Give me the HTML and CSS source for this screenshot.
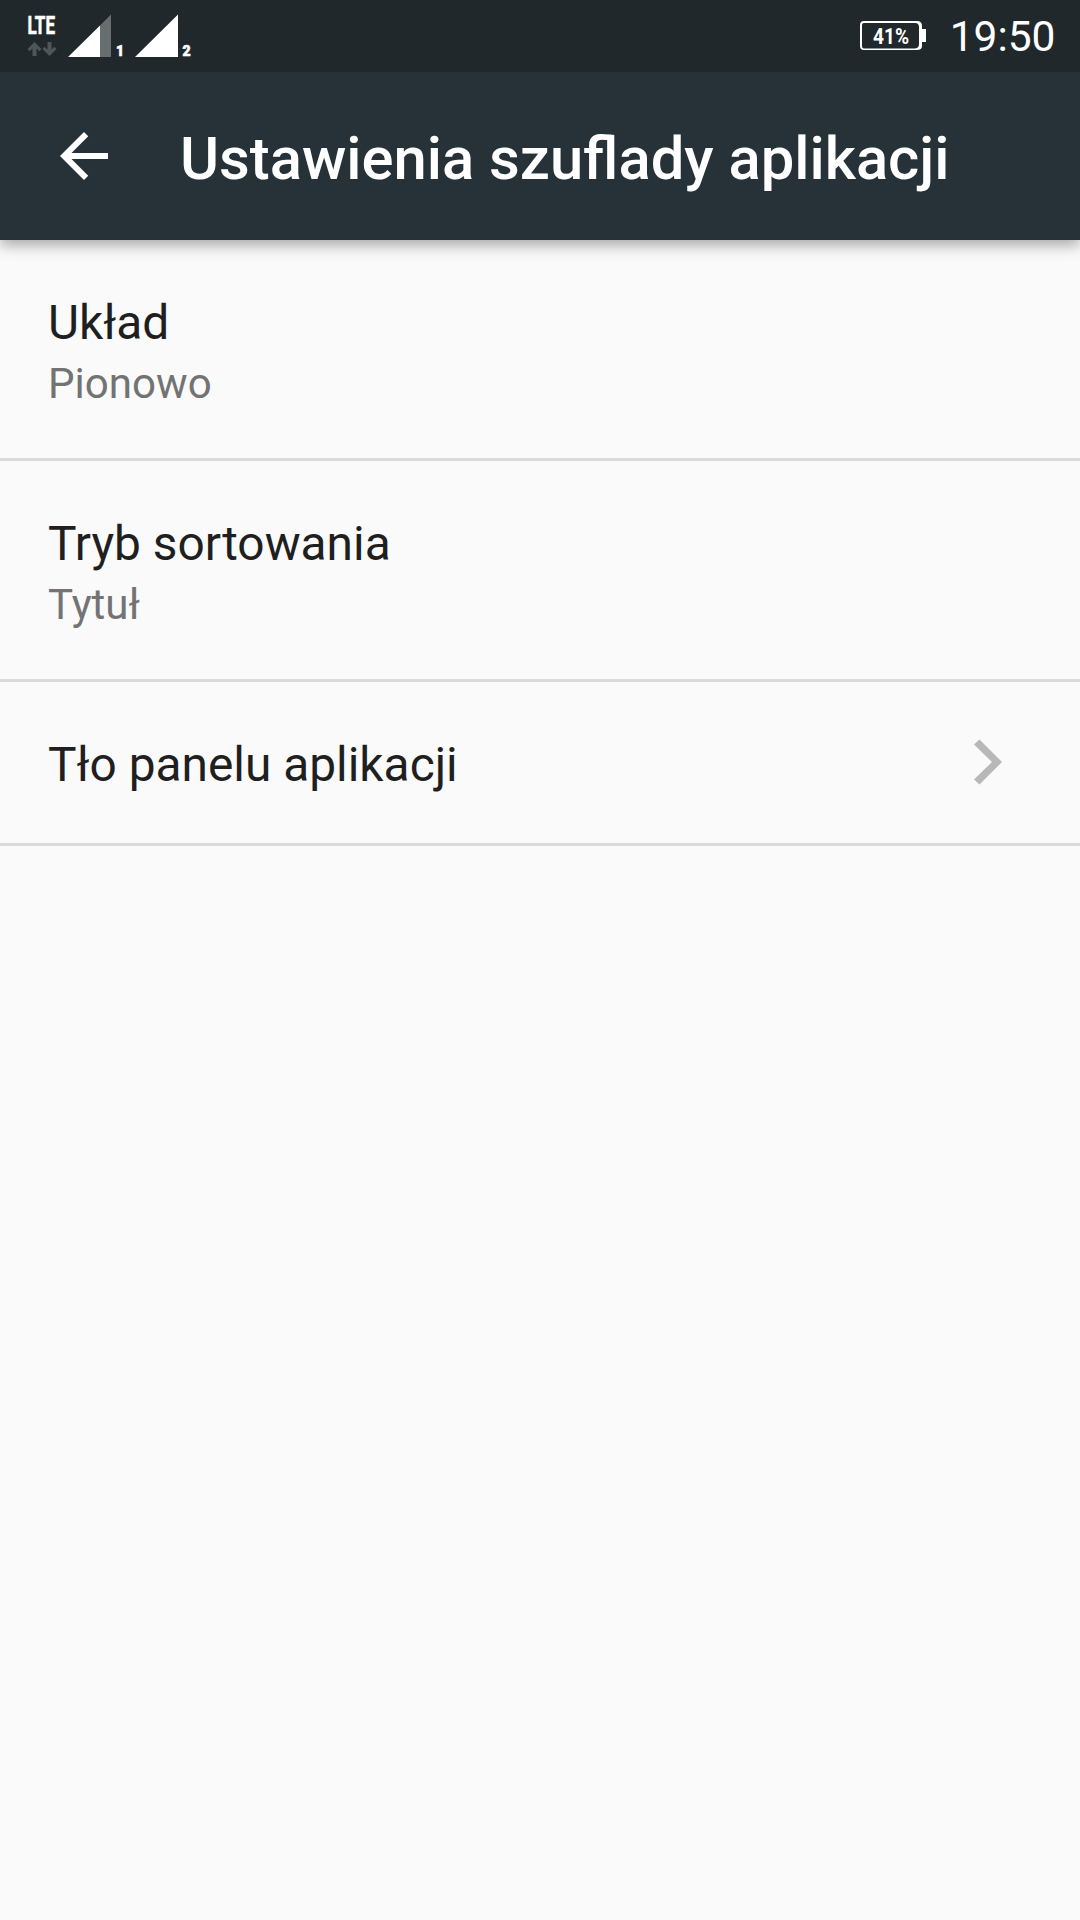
FILE: index.html
```html
<!DOCTYPE html>
<html lang="pl">
<head>
<meta charset="utf-8">
<title>Ustawienia szuflady aplikacji</title>
<link rel="stylesheet" href="styles.css">
</head>
<body>
<div class="status-bar">
  <svg class="signals" width="200" height="72" viewBox="0 0 200 72">
    <text class="network" x="27.500" y="33.500" textLength="27.500" lengthAdjust="spacingAndGlyphs">LTE</text>
    <path class="data-arrows" d="M34.500 42l7 7-2.200 2.200-2.800-2.600V56h-4v-7.400l-2.800 2.600-2.200-2.200zM49.500 56l-7-7 2.200-2.200 2.800 2.600V42h4v7.400l2.800-2.600 2.200 2.200z"/>
    <path class="signal-empty" d="M100 25.500 111 14.500V57H100z"/>
    <path class="signal-full" d="M68 57 100 25.500V57zM135 57 178 14.500V57z"/>
    <text class="sim" x="116" y="56">1</text>
    <text class="sim" x="182.500" y="56">2</text>
  </svg>
  <div class="status-right">
    <svg class="battery" width="66" height="30" viewBox="0 0 66 30">
      <path class="battery-case" fill-rule="evenodd" d="M4 0H57Q62 0 62 5V8H66V21H62V25Q62 29 57 29H4Q0 29 0 25V4Q0 0 4 0zM4 2Q2 2 2 4V25Q2 27.500 4 27.500H55Q59 27 59 23V6Q59 2 55 2z"/>
      <text class="battery-level" x="13" y="23" textLength="36" lengthAdjust="spacingAndGlyphs">41%</text>
    </svg>
    <span class="clock">19:50</span>
  </div>
</div>
<header class="toolbar">
  <svg class="back" width="72" height="72" viewBox="0 0 24 24"><path d="M20 11H7.830l5.590-5.590L12 4l-8 8 8 8 1.410-1.410L7.830 13H20v-2z"/></svg>
  <h1 class="title">Ustawienia szuflady aplikacji</h1>
</header>
<main class="settings">
  <div class="row">
    <div class="label">Układ</div>
    <div class="value">Pionowo</div>
  </div>
  <div class="row">
    <div class="label">Tryb sortowania</div>
    <div class="value">Tytuł</div>
  </div>
  <div class="row row-link">
    <div class="label">Tło panelu aplikacji</div>
    <svg class="chevron" width="30" height="46" viewBox="0 0 30 46"><path d="M5.500 .5 0 5.500 18 23 0 40.500 5.500 45.500 28 23z"/></svg>
  </div>
</main>
</body>
</html>
```
FILE: styles.css
```css
body {
  margin: 0;
  min-height: 1920px;
  background: #fafafa;
  font-family: Roboto, "Noto Sans", sans-serif;
}

.status-bar {
  position: relative;
  z-index: 1;
  display: flex;
  justify-content: space-between;
  height: 72px;
  background: #20282b;
  color: #fff;
}

.signals,
.battery {
  display: block;
  fill: #fff;
  font-weight: 700;
}

.network {
  font-size: 26.5px;
  stroke: #fff;
  stroke-width: 0.6px;
}

.sim {
  font-size: 14px;
  font-weight: 900;
  stroke: #fff;
  stroke-width: 0.6px;
}

.data-arrows {
  fill: #4f5658;
}

.signal-empty {
  fill: #686e70;
}

.status-right {
  display: flex;
  align-items: flex-start;
  gap: 24px;
  padding-right: 24.5px;
}

.battery {
  margin-top: 21px;
}

.battery-level {
  font-size: 21.5px;
}

.clock {
  margin-top: 12px;
  font-size: 42.5px;
  line-height: 50px;
}

.toolbar {
  display: flex;
  align-items: center;
  gap: 60px;
  box-sizing: border-box;
  height: 168px;
  padding: 0 48px;
  background: #263238;
  box-shadow: 0 5px 14px rgba(0, 0, 0, 0.34);
}

.back {
  fill: #fff;
}

.title {
  margin: 6px 0 0;
  color: #fff;
  font-size: 59.75px;
  line-height: 70px;
  font-weight: 500;
}

.row {
  box-sizing: border-box;
  height: 221px;
  padding: 55px 48px 0;
  border-bottom: 3px solid #dadada;
}

.label {
  color: #1f1f1f;
  font-size: 47.85px;
  line-height: 56px;
}

.value {
  margin-top: 8px;
  color: #737373;
  font-size: 42.1px;
  line-height: 50px;
}

.row-link {
  display: flex;
  justify-content: space-between;
  align-items: flex-start;
  height: 164px;
  padding-right: 76px;
}

.chevron {
  margin-top: 2px;
  fill: #b8b8b8;
}
```
